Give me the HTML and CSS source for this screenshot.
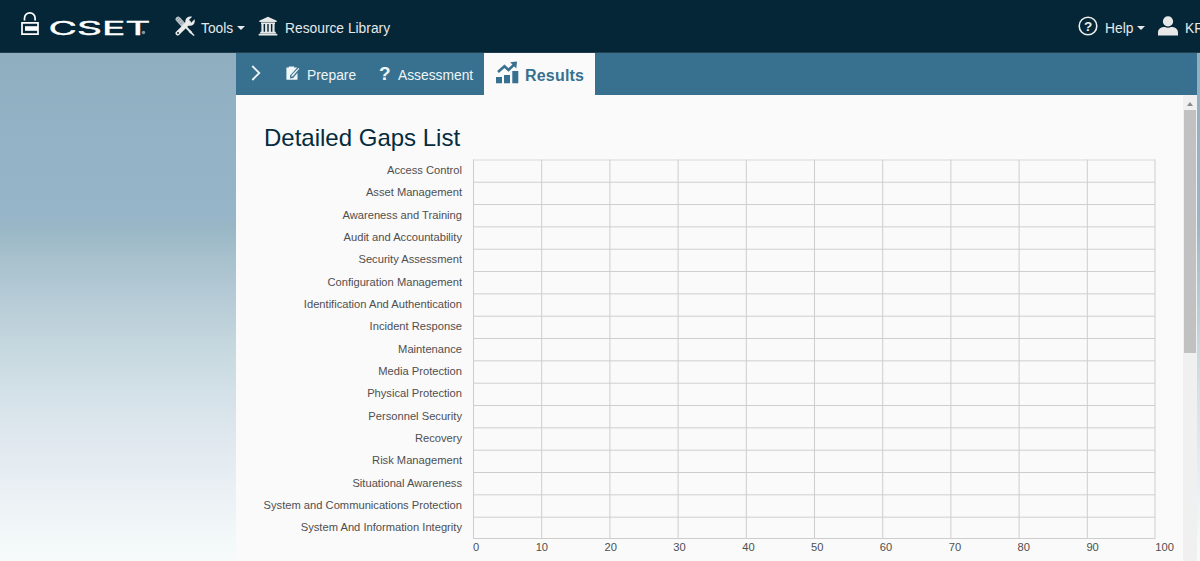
FILE: index.html
```html
<!DOCTYPE html>
<html lang="en">
<head>
<meta charset="utf-8">
<title>CSET - Detailed Gaps List</title>
<link rel="stylesheet" href="styles.css">
</head>
<body>
<header class="topbar">
  <a class="brand">
    <svg class="lock" width="18" height="24" viewBox="0 0 18 24"><path d="M3.5 8.5V6.2a5.3 5.3 0 0 1 10.6 0v2.3" fill="none" stroke="#fff" stroke-width="1.7"/><path d="M1 10.8h16v11.4H1z" fill="none" stroke="#fff" stroke-width="1.7"/><path d="M4 14.2h13v4.6H4z" fill="#fff"/></svg>
    <svg class="wordmark" width="104" height="24" viewBox="0 0 104 24"><text x="-.5" y="18.8" textLength="102" lengthAdjust="spacingAndGlyphs">CSET</text><circle cx="94.5" cy="16.5" r="1.7" fill="#8195a0"/></svg>
  </a>
  <a class="menu tools">
    <svg width="20" height="20" viewBox="0 0 20 20"><path d="M3.2 3.2l4.6 5" stroke="#b9c3c8" stroke-width="5.2" stroke-linecap="round"/><path d="M1.5 4.5l3-3M3.3 6.4l3-3M5.1 8.3l3-3" stroke="#65777f" stroke-width=".6"/><path d="M9 9l7.3 7.8" stroke="#e9e9e9" stroke-width="2"/><path d="M15.5 14.5l4.1 4.7-1 .7-4.7-4z" fill="#e9e9e9"/><path d="M2.7 17.3L13.6 6.4" stroke="#ececec" stroke-width="4.4" stroke-linecap="round"/><path d="M17.1.8l-3.5 3.4.5 2.1 2.1.4 3.3-3.4c1 3-.8 6.1-3.8 6.4-3.5.4-6.1-2.6-5.2-5.8.8-2.8 3.8-4 6.6-3.1z" fill="#ececec"/><circle cx="3" cy="17" r="1" fill="#042636"/></svg>
    <span>Tools</span><i class="caret"></i>
  </a>
  <a class="menu library">
    <svg width="20" height="20" viewBox="0 0 20 20"><path d="M10 .7l8.7 4v1.4H1.3V4.7z" fill="#e8e8e8"/><path d="M3 6.5h14v1.6H3zM3.4 8h2.2v8H3.4zM7.1 8h2.2v8H7.1zM10.7 8h2.2v8h-2.2zM14.4 8h2.2v8h-2.2zM2.2 15.7h15.6v1.8H2.2zM.7 17.7h18.6v1.7H.7z" fill="#e8e8e8"/><path d="M3 6.4h14" stroke="#8d9ba2" stroke-width=".9"/></svg>
    <span>Resource Library</span>
  </a>
  <a class="menu help">
    <svg width="20" height="20" viewBox="0 0 20 20"><circle cx="10" cy="10" r="8.8" fill="none" stroke="#eee" stroke-width="1.6"/><text class="helpmark" x="10" y="14.9" text-anchor="middle">?</text></svg>
    <span>Help</span><i class="caret"></i>
  </a>
  <a class="menu user">
    <svg width="20" height="20" viewBox="0 0 20 20"><circle cx="10" cy="5.4" r="5.1" fill="#e8e8e8"/><path d="M0 19.6v-2.8c0-4 3.2-5.7 6.8-5.7 2.1.9 4.3.9 6.4 0 3.6 0 6.8 1.7 6.8 5.7v2.8z" fill="#e8e8e8"/></svg>
    <span>KR</span>
  </a>
</header>
<div class="body">
  <aside class="side"></aside>
  <section class="panel">
    <nav class="tabs">
      <a class="expand"><svg width="10" height="16" viewBox="0 0 10 16"><path d="M1.3 1l7 7-7 7" fill="none" stroke="#f0f5f8" stroke-width="1.8"/></svg></a>
      <a class="tab prepare">
        <svg width="14" height="15" viewBox="0 0 14 15"><path d="M.4 1.5h2.4V.4h5.3v1.1h3.1l-7.1 8 .1 2.9 3-.4 4.3-5.2v7H.4z" fill="#f0f5f8"/><path d="M12.4 1.7l1.2 1-6.7 8-2.1.6.5-2.2z" fill="#f0f5f8" stroke="#37718f" stroke-width=".7"/></svg>
        <span>Prepare</span>
      </a>
      <a class="tab assessment"><b class="question">?</b><span>Assessment</span></a>
      <a class="tab results">
        <svg width="23" height="23" viewBox="0 0 23 23"><path d="M0 16h6v6.2H0zM8 13.9h6v8.3H8zM16.3 10h6v12.2h-6z" fill="#37718f"/><path d="M2 10.9l6.5-5.6 4 3.6 5.4-5" fill="none" stroke="#37718f" stroke-width="2.6"/><path d="M14.2 1.3L21 .5l-.7 7z" fill="#37718f"/></svg>
        <span>Results</span>
      </a>
    </nav>
    <div class="view">
      <main class="content">
        <h1>Detailed Gaps List</h1>
        <div class="chart">
          <ul class="labels">
            <li>Access Control</li><li>Asset Management</li><li>Awareness and Training</li><li>Audit and Accountability</li><li>Security Assessment</li><li>Configuration Management</li><li>Identification And Authentication</li><li>Incident Response</li><li>Maintenance</li><li>Media Protection</li><li>Physical Protection</li><li>Personnel Security</li><li>Recovery</li><li>Risk Management</li><li>Situational Awareness</li><li>System and Communications Protection</li><li>System And Information Integrity</li>
          </ul>
          <div class="plot">
            <svg class="grid" width="683" height="381" viewBox="0 0 683 381">
              <defs><pattern id="cell" width="68.2" height="22.33" patternUnits="userSpaceOnUse" x="0" y=".4"><path d="M0 .5h68.2M.5 0v22.33" stroke="#cdcdcd" fill="none"/></pattern></defs>
              <rect x="0" y=".4" width="682" height="379.6" fill="url(#cell)"/><path d="M682 .4v379.6M0 379.5h682" stroke="#cdcdcd"/>
            </svg>
            <div class="axis"><span>0</span><span>10</span><span>20</span><span>30</span><span>40</span><span>50</span><span>60</span><span>70</span><span>80</span><span>90</span><span>100</span></div>
          </div>
        </div>
      </main>
      <div class="scroll"><div class="up"><i></i></div><div class="thumb"></div></div>
    </div>
  </section>
</div>
</body>
</html>
```
FILE: styles.css
```css
* { box-sizing: border-box; }
body { margin: 0; height: 561px; overflow: hidden; display: flex; flex-direction: column; font: 13.8px/20px "Liberation Sans", Arial, sans-serif; }
svg { display: block; flex: none; }
.topbar { height: 53px; flex: none; display: flex; background: #042636; color: #e6e9eb; border-bottom: 1px solid #203f4e; white-space: nowrap; overflow: hidden; }
.brand { display: flex; width: 154px; padding: 12px 0 0 21px; }
.wordmark { margin: 4px 0 0 10px; }
.wordmark text { font: 19px Inter, sans-serif; fill: #fff; stroke: #fff; stroke-width: .4px; }
.menu { display: flex; flex: none; padding-top: 16px; }
.menu span { padding-top: 3px; }
.menu svg { margin-right: 6px; }
.tools { margin-left: 21px; width: 83px; }
.library svg { margin-right: 7px; }
.help { margin-left: auto; width: 80px; }
.help svg, .user svg { margin-right: 7px; }
.user { width: 42px; }
.helpmark { font: bold 13.5px "Liberation Sans", Arial, sans-serif; fill: #eee; }
.caret { margin: 10px 0 0 4px; height: 4px; border: 4px solid transparent; border-top-color: #e6e9eb; border-bottom: 0; }
.body { flex: 1; min-height: 0; display: flex; padding-right: 3px; background: linear-gradient(#8fafc1 0, #97b5c9 32%, #98b6c5 34%, #a4bfcb 39%, #b2c8d4 46%, #c6d8df 58%, #d5e2e9 68%, #e1e9ef 77%, #eaf0f4 86%, #f3f8f9 96%, #f6fafa 100%); }
.side { width: 236px; flex: none; }
.panel { flex: 1; display: flex; flex-direction: column; background: #fafafa; }
.tabs { height: 42px; flex: none; display: flex; background: #37718f; color: #f0f5f8; }
.expand { width: 50px; padding: 12px 0 0 15px; }
.tab { display: flex; flex: none; padding-top: 12px; }
.tab span { padding-top: 1px; }
.prepare { width: 94px; }
.prepare svg { margin: 1px 7px 0 0; }
.assessment { width: 104px; }
.question { width: 19px; margin-left: -1px; font: bold 19px/18px "Liberation Sans", Arial, sans-serif; }
.results { width: 111px; background: #fafafa; color: #37718f; padding: 8px 0 0 12px; font-weight: bold; font-size: 16px; letter-spacing: .2px; }
.results span { padding: 5px 0 0 6px; }
.view { flex: 1; min-height: 0; display: flex; }
.content { flex: 1; padding: 29px 0 0 27px; }
h1 { margin: 0 0 0 1px; font: 24px/28px "Liberation Sans", Arial, sans-serif; color: #042c3e; }
.chart { display: flex; margin-top: 7px; font-size: 11.17px; color: #4f4f4f; }
.labels { width: 199px; flex: none; list-style: none; margin: 0; padding: 0; text-align: right; white-space: nowrap; }
.labels li { height: 22.33px; line-height: 22.33px; }
.plot { margin-left: 11px; width: 701px; flex: none; }
.axis { display: flex; justify-content: space-between; line-height: 14px; }
.scroll { width: 14px; flex: none; background: #f0f0f0; }
.up { height: 15px; display: flex; justify-content: center; padding-top: 7px; }
.up i { border: 3px solid transparent; border-bottom: 4px solid #8a8a8a; border-top: 0; height: 4px; }
.thumb { height: 243px; margin: 0 1px; background: #c1c1c1; }
```
